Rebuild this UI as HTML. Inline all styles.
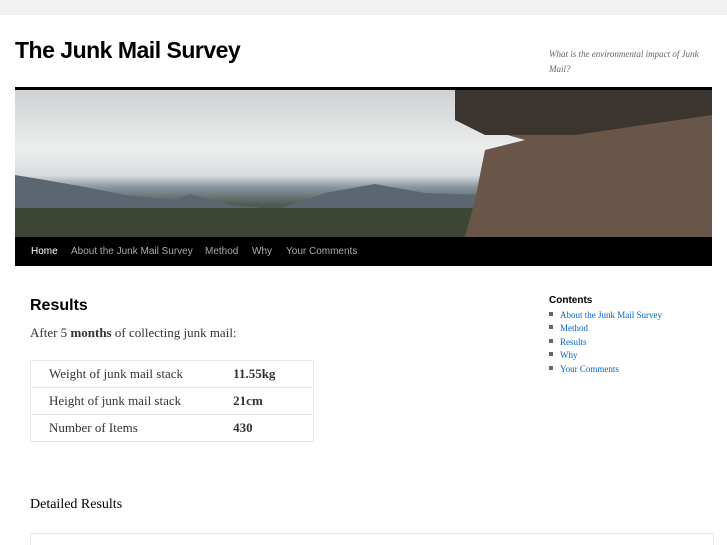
<!DOCTYPE html>
<html><head><style>
html,body{margin:0;background:#f1f1f1;width:727px;height:545px;overflow:hidden;font-family:"Liberation Serif",serif;}
#wrap{position:absolute;top:15px;left:0;width:727px;height:530px;background:#fff;overflow:hidden}
.title{position:absolute;left:15px;top:22px;font:bold 23px "Liberation Sans",sans-serif;color:#000;letter-spacing:-0.5px}
.desc{position:absolute;left:549px;top:32px;width:170px;font:italic 9px/15px "Liberation Serif",serif;color:#666}
.bar{position:absolute;left:15px;top:72px;width:697px;height:3px;background:#000}
.img{position:absolute;left:15px;top:75px;width:697px;height:147px;overflow:hidden;background:linear-gradient(#cfd1d3,#eceded 40%,#d9dcdf 58%,#8a96a2 66%,#4e5a52 78%,#38402f)}
.nav{position:absolute;left:15px;top:222px;width:697px;height:29px;background:#000;font:10px "Liberation Sans",sans-serif;color:#aaa}
.nav span{position:absolute;top:9px}
h1{position:absolute;left:30px;top:282px;margin:0;font:bold 16px "Liberation Sans",sans-serif;color:#000}
.p{position:absolute;left:30px;top:310px;font-size:13px;color:#333}
table{position:absolute;left:30px;top:345px;width:284px;border-collapse:collapse;font-size:13px;color:#333}
td{border-top:1px solid #e7e7e7;border-bottom:1px solid #e7e7e7;height:26px;padding:0 0 0 18px}
td:first-child{border-left:1px solid #e7e7e7;width:172px}
td:last-child{border-right:1px solid #e7e7e7;padding-left:0;width:75px}
h3{position:absolute;left:30px;top:482px;margin:0;font:normal 14px "Liberation Serif",serif;color:#000}
.t2{position:absolute;left:30px;top:518px;width:682px;height:40px;border:1px solid #e7e7e7}
.side{position:absolute;left:549px;top:280px;font:bold 10px "Liberation Sans",sans-serif;color:#000}
.side ul{margin:3px 0 0;padding:0;list-style:none;font:normal 9px/13.4px "Liberation Serif",serif}
.side li a{color:#0066cc;text-decoration:none}
.side li:before{content:"";display:inline-block;width:4px;height:4px;background:#666;margin-right:7px;vertical-align:2px}
</style></head><body>
<div id="wrap">
<div class="title">The Junk Mail Survey</div>
<div class="desc">What is the environmental impact of Junk Mail?</div>
<div class="bar"></div>
<div class="img"><svg width="697" height="147" style="position:absolute;left:0;top:0">
<path d="M0 85 L30 90 L70 97 L110 105 L160 110 L175 104 L215 115 L240 117 L260 120 L310 103 L360 94 L410 103 L470 105 L470 147 L0 147Z" fill="#5b6670"/>
<path d="M0 118 L470 118 L470 147 L0 147Z" fill="#3d4535"/>
<path d="M440 0 L697 0 L697 147 L450 147 L460 110 L470 60 L510 50 L440 30Z" fill="#6a5648"/>
<path d="M440 0 L697 0 L697 25 L560 45 L470 45 L440 30Z" fill="#3c352f"/>
</svg></div>
<div class="nav"><span style="left:16px;color:#fff">Home</span><span style="left:56px">About the Junk Mail Survey</span><span style="left:190px">Method</span><span style="left:237px">Why</span><span style="left:271px">Your Comments</span></div>
<h1>Results</h1>
<div class="p">After 5 <b>months</b> of collecting junk mail:</div>
<table><tr><td>Weight of junk mail stack</td><td><b>11.55kg</b></td></tr><tr><td>Height of junk mail stack</td><td><b>21cm</b></td></tr><tr><td>Number of Items</td><td><b>430</b></td></tr></table>
<h3>Detailed Results</h3>
<div class="t2"></div>
<div class="side">Contents<ul><li><a>About the Junk Mail Survey</a></li><li><a>Method</a></li><li><a>Results</a></li><li><a>Why</a></li><li><a>Your Comments</a></li></ul></div>
</div>
</body></html>
